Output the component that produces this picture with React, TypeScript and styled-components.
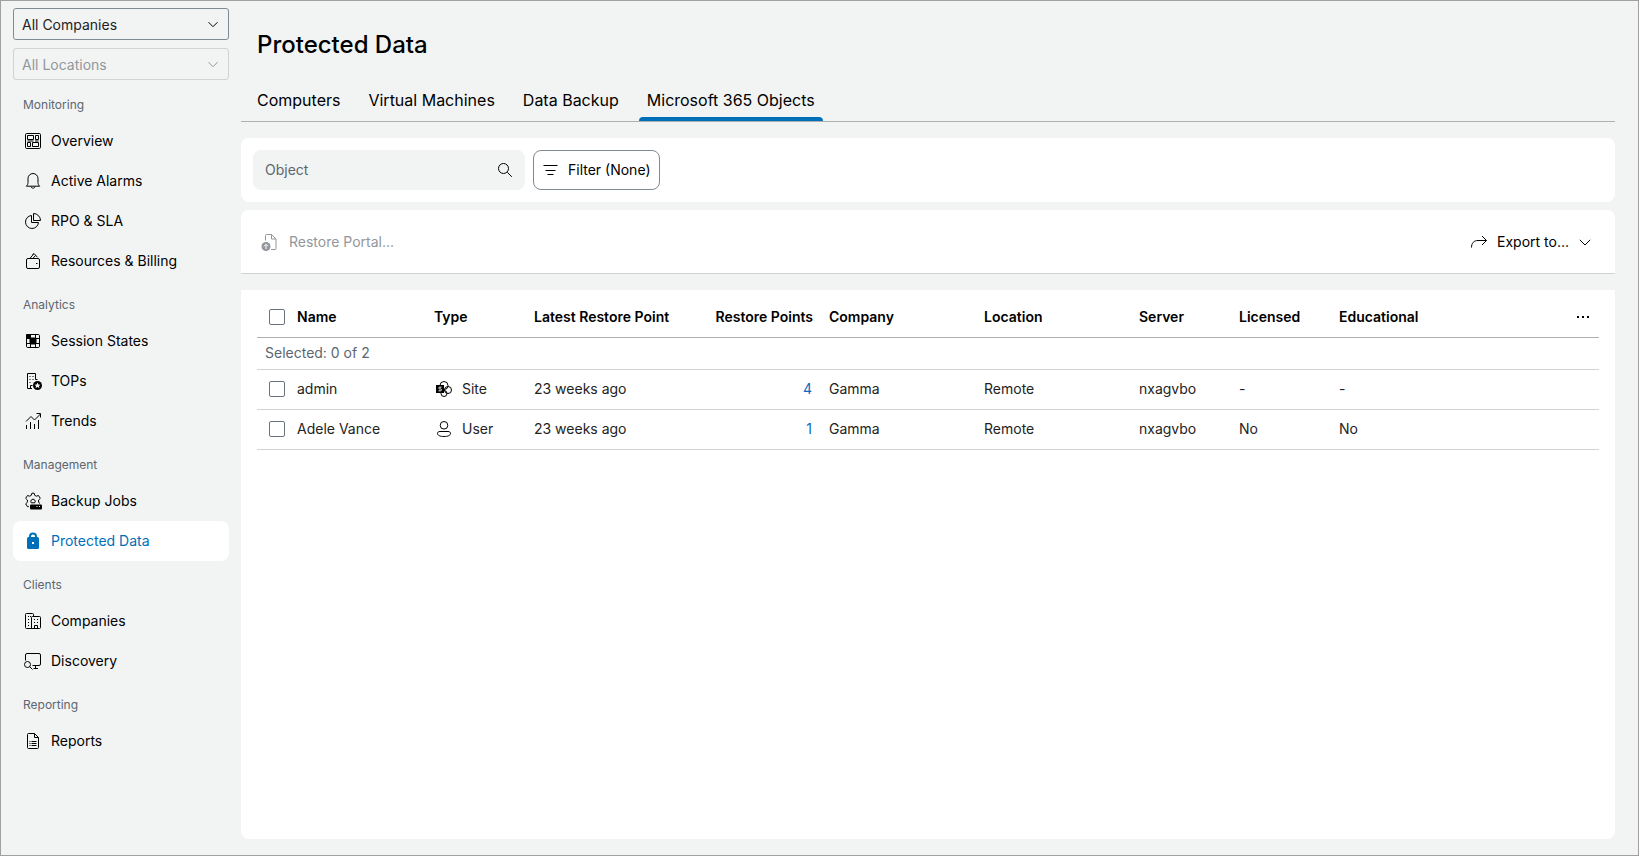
import React from "react";
import styled, { createGlobalStyle } from "styled-components";

const color = {
  page: "#f2f4f4",
  panel: "#ffffff",
  text: "#000000",
  cell: "#232323",
  muted: "#5c6670",
  disabled: "#92979c",
  accent: "#006fba",
  link: "#0d6abf",
  line: "#d0d2d3",
  lineStrong: "#adb0b2",
  control: "#808a94",
};

const GlobalStyle = createGlobalStyle`
  *, *::before, *::after { box-sizing: border-box; }
  body { margin: 0; background: ${color.page}; }
  body, button, input, select {
    font-family: Inter, "Liberation Sans", sans-serif;
    font-size: 14px;
    line-height: 20px;
    color: ${color.text};
  }
`;

const Page = styled.div`
  display: flex;
  min-height: 100vh;
  border: 1px solid #a0a0a0;
  background: ${color.page};
`;

const Sidebar = styled.aside`
  flex: none;
  width: 228px;
  padding: 7px 0 16px 12px;
`;

const Scope = styled.div`
  display: flex;
  flex-direction: column;
  gap: 8px;
`;

const SelectBox = styled.div<{ $disabled?: boolean }>`
  display: grid;
  align-items: center;
  color: ${(p) => (p.$disabled ? color.disabled : color.text)};

  > * { grid-area: 1 / 1; }
  > svg {
    justify-self: end;
    margin-right: 10px;
    pointer-events: none;
  }
`;

const Select = styled.select`
  appearance: none;
  width: 100%;
  height: 32px;
  padding: 2px 32px 0 8px;
  border: 1px solid ${color.control};
  border-radius: 3px;
  background: transparent;
  color: ${color.cell};

  &:disabled {
    border-color: #cfd3d5;
    color: ${color.disabled};
    opacity: 1;
  }
`;

const Nav = styled.nav`
  padding-top: 1px;
`;

const NavHeading = styled.h2`
  margin: 0;
  padding: 14px 10px 6px;
  font-size: 12px;
  line-height: 20px;
  font-weight: 400;
  color: ${color.muted};
`;

const NavList = styled.ul`
  margin: 0;
  padding: 0;
  list-style: none;
`;

const NavLink = styled.a<{ $active?: boolean }>`
  display: flex;
  align-items: center;
  gap: 10px;
  height: 40px;
  padding: 0 12px;
  border-radius: 8px;
  color: ${(p) => (p.$active ? color.accent : color.text)};
  background: ${(p) => (p.$active ? color.panel : "transparent")};
  text-decoration: none;
`;

const Main = styled.main`
  flex: 1;
  min-width: 0;
  display: flex;
  flex-direction: column;
  padding: 28px 23px 16px 12px;
`;

const Title = styled.h1`
  margin: 0 16px 16px;
  font-size: 24px;
  line-height: 32px;
  font-weight: 500;
`;

const Tabs = styled.div`
  display: flex;
  gap: 12px;
  padding: 0 8px;
  border-bottom: 1px solid ${color.lineStrong};
`;

const Tab = styled.button<{ $active?: boolean }>`
  display: flex;
  flex-direction: column;
  justify-content: flex-end;
  gap: 5px;
  height: 44px;
  padding: 0;
  border: 0;
  background: none;
  font-size: 16px;
  line-height: 24px;
  white-space: nowrap;

  &::after {
    content: "";
    align-self: stretch;
    height: 4px;
    border-radius: 4px 4px 0 0;
    background: ${(p) => (p.$active ? color.accent : "transparent")};
  }
`;

const TabLabel = styled.span`
  padding: 0 8px;
`;

const FilterPanel = styled.section`
  display: flex;
  gap: 8px;
  margin-top: 16px;
  padding: 12px;
  border-radius: 8px;
  background: ${color.panel};
`;

const SearchBox = styled.div`
  display: flex;
  align-items: center;
  width: 272px;
  height: 40px;
  padding: 0 12px;
  border-radius: 8px;
  background: ${color.page};
`;

const SearchInput = styled.input`
  flex: 1;
  min-width: 0;
  padding: 0;
  border: 0;
  background: none;
  outline: none;

  &::placeholder {
    color: ${color.muted};
    opacity: 1;
  }
`;

const IconButton = styled.button`
  display: flex;
  padding: 0;
  border: 0;
  background: none;
`;

const FilterButton = styled.button`
  display: flex;
  align-items: center;
  gap: 10px;
  height: 40px;
  padding: 0 8px;
  border: 1px solid ${color.control};
  border-radius: 8px;
  background: ${color.panel};
  white-space: nowrap;
`;

const Toolbar = styled.section`
  display: flex;
  align-items: center;
  justify-content: space-between;
  height: 64px;
  margin-top: 8px;
  padding: 0 20px;
  border-bottom: 1px solid ${color.line};
  border-radius: 8px 8px 0 0;
  background: ${color.panel};
`;

const ToolButton = styled.button`
  display: flex;
  align-items: center;
  gap: 10px;
  height: 40px;
  padding: 0;
  border: 0;
  background: none;

  &:disabled {
    gap: 12px;
    color: ${color.disabled};
  }
`;

const ChevronSlot = styled.span`
  display: flex;
  padding-right: 4px;
`;

const TablePanel = styled.section`
  flex: 1;
  margin-top: 16px;
  padding: 8px 16px;
  border-radius: 0 0 8px 8px;
  background: ${color.panel};
`;

const Table = styled.table`
  width: 100%;
  table-layout: fixed;
  border-collapse: collapse;
`;

const Col = styled.col<{ $width?: number }>`
  width: ${(p) => (p.$width ? `${p.$width}px` : "auto")};
`;

const Row = styled.tr<{ $head?: boolean }>`
  border-bottom: 1px solid ${(p) => (p.$head ? color.lineStrong : color.line)};
`;

const HeadCell = styled.th<{ $end?: boolean }>`
  height: 39px;
  padding: 0 8px;
  font-weight: 600;
  text-align: ${(p) => (p.$end ? "right" : "left")};
  white-space: nowrap;
`;

const Cell = styled.td<{ $end?: boolean }>`
  height: 40px;
  padding: 0 8px;
  color: ${color.cell};
  text-align: ${(p) => (p.$end ? "right" : "left")};
  white-space: nowrap;

  svg { color: ${color.text}; }
`;

const SelectionCell = styled.td`
  height: 32px;
  padding: 0 8px;
  color: ${color.muted};
`;

const TypeLabel = styled.span`
  display: flex;
  align-items: center;
  gap: 10px;
  padding-left: 2px;
`;

const MoreSlot = styled.div`
  display: flex;
  justify-content: flex-end;
`;

const PointsLink = styled.a`
  color: ${color.link};
  text-decoration: none;
  padding-right: 1px;
`;

const Checkbox = styled.input`
  appearance: none;
  display: block;
  width: 16px;
  height: 16px;
  margin: 0 4px;
  border: 1px solid #6a737c;
  border-radius: 2px;
  background: ${color.panel};

  &:checked { background: ${color.accent}; }
`;

const IconFrame = styled.svg`
  flex: none;
  display: block;
  overflow: visible;
`;

const Svg = ({ children }: { children: React.ReactNode }) => (
  <IconFrame width="16" height="16" viewBox="0 0 16 16" fill="none" stroke="currentColor" strokeWidth="1" aria-hidden="true">
    {children}
  </IconFrame>
);

const Chevron = () => (
  <IconFrame width="12" height="8" viewBox="0 0 12 8" fill="none" stroke="currentColor" strokeWidth="1" aria-hidden="true">
    <path d="M.8 1.800 6 7 11.200 1.800" />
  </IconFrame>
);

const SmallChevron = () => (
  <IconFrame width="12" height="8" viewBox="0 0 12 8" fill="none" stroke="currentColor" strokeWidth="1" aria-hidden="true">
    <path d="M1.500 2.200 6 6.700 10.500 2.200" />
  </IconFrame>
);

const OverviewIcon = () => (
  <Svg>
    <rect x=".5" y=".5" width="15" height="15" rx="1.200" />
    <path d="M2.500 2.500h6v4h-6zM10.500 2.500h3v4h-3zM2.500 9.500h3v4h-3zM7.500 9.500h6v4h-6zM2.500 8h6M10 8h3.500" />
  </Svg>
);
const BellIcon = () => (
  <Svg>
    <path d="M1.300 13.200c1.200-1.100 1.700-2.200 1.700-3.700V5.500a5 5 0 0 1 10 0v4c0 1.500.5 2.600 1.700 3.700zM6 13.500c.3 2.200 3.700 2.200 4 0" strokeLinejoin="round" />
  </Svg>
);
const PieIcon = () => (
  <Svg>
    <path d="M6.500 2.500a6.500 6.500 0 1 0 7 7h-7z" />
    <path d="M8.500.5v7h7a7 7 0 0 0-7-7z" />
  </Svg>
);
const WalletIcon = () => (
  <Svg>
    <rect x="1.500" y="5.500" width="13" height="10" rx="1.500" />
    <path d="M11 10.500h1.500M5 5.300 8.500 1.200M8 5.300 10.500 2.500M7.500 1.500 9 .5l3.500 3.800" />
  </Svg>
);
const HeatmapIcon = () => (
  <Svg>
    <rect x="1.500" y="1.500" width="13" height="13" rx="1.200" />
    <path d="M5.500 1.500v13M10.500 1.500v13M1.500 5.500h13M1.500 10.500h13" />
    <path d="M5 5h6v6H5zM1.500 1.500h4v4h-4z" fill="currentColor" />
  </Svg>
);
const TopsIcon = () => (
  <Svg>
    <path d="M7 15.500H2.500V.5h8v6M5.500 15v-2.500h2M10.500 6.500h2" />
    <path d="M4.500 3.500h1M7.500 3.500h1M4.500 6.500h1M7.500 6.500h1M4.500 9.500h1" />
    <circle cx="12.500" cy="12.500" r="4.500" fill="currentColor" stroke="none" />
    <path d="m12.500 9.600.9 1.800 2 .3-1.400 1.400.3 2-1.800-1-1.800 1 .3-2-1.400-1.400 2-.3z" fill={color.page} stroke="none" />
  </Svg>
);
const TrendsIcon = () => (
  <Svg>
    <path d="M1.500 12v4M5.500 9v7M9.500 11v5M13.500 7v9" />
    <path d="M1 8.500 6 3.500l3.500 3.500L15.500 1M11.500.5h4v4" />
  </Svg>
);
const JobsIcon = () => (
  <Svg>
    <path d="M3.800 13.500 2.500 13.800.7 10.800 2.400 9.300V7L.7 5.400 2.500 2.500 4.700 3.200 6.300 2.300 6.900.2H9.100L9.700 2.300 11.300 3.200 13.500 2.500 15.300 5.400 13.600 7V9.300L15 10.500" strokeLinejoin="round" />
    <path d="M6.300 9.800a2.200 2.200 0 1 1 3.400 0z" />
    <rect x="5" y="11.500" width="12" height="5" rx="1" fill="currentColor" stroke="none" />
    <path d="M11.500 13.500h1M14 13.500h1" stroke={color.page} />
  </Svg>
);
const LockIcon = () => (
  <Svg>
    <path d="M5 5V3.500a3 3 0 0 1 6 0V5" strokeWidth="2" />
    <rect x="2" y="4" width="12" height="12" rx="1.500" fill="currentColor" stroke="none" />
    <path d="M7 10h2" stroke="#fff" strokeWidth="2" />
  </Svg>
);
const CompaniesIcon = () => (
  <Svg>
    <path d="M7.500 15.500h-6a1 1 0 0 1-1-1v-13a1 1 0 0 1 1-1h6a1 1 0 0 1 1 1v2M6.500 15.500v-11a1 1 0 0 1 1-1h7a1 1 0 0 1 1 1v10a1 1 0 0 1-1 1zM9.500 15.500v-3h3v3" />
    <path d="M3 3.500h1M5 3.500h1M3 6.500h1M3 9.500h1M3 12.500h1M9 6.500h1M12 6.500h1M9 9.500h1M12 9.500h1" />
  </Svg>
);
const DiscoveryIcon = () => (
  <Svg>
    <path d="M.5 7.500V2A1.500 1.500 0 0 1 2 .5h12A1.500 1.500 0 0 1 15.500 2v9a1.500 1.500 0 0 1-1.500 1.500H7.500M10.500 12.500v3M8.500 15.500H13" />
    <circle cx="2.500" cy="11.500" r="3" />
    <path d="m4.700 13.700 2.800 2.800" />
  </Svg>
);
const ReportIcon = () => (
  <Svg>
    <path d="M9.500.5h-6a1 1 0 0 0-1 1v13a1 1 0 0 0 1 1h9a1 1 0 0 0 1-1v-10zM9.500.5v4h4" strokeLinejoin="round" />
    <path d="M4.500 8.500h1M6.500 8.500h5M4.500 10.500h1M6.500 10.500h5M4.500 12.500h1M6.500 12.500h5" />
  </Svg>
);
const SearchIcon = () => (
  <Svg>
    <circle cx="6.500" cy="6.500" r="5" />
    <path d="m10.300 10.300 4.500 4.500" />
  </Svg>
);
const FilterIcon = () => (
  <Svg>
    <path d="M1.500 3.500h14M3.500 8.500h10M5.500 12.500h6" />
  </Svg>
);
const RestoreIcon = () => (
  <Svg>
    <path d="M4.500 6.500V1.500a1 1 0 0 1 1-1h5l4.500 4.500v9.500a1 1 0 0 1-1 1H10M10.500.5v4.500H15" />
    <circle cx="5" cy="12.500" r="4.500" fill="currentColor" stroke="none" />
    <path d="M5 15v-4.500M3 12.300l2-2 2 2" stroke="#fff" />
  </Svg>
);
const ExportIcon = () => (
  <Svg>
    <path d="M.5 13.500C.5 9 3 6.500 7 6.500h8.500M11 2l4.500 4.500L11 11" />
  </Svg>
);
const MoreIcon = () => (
  <Svg>
    <path d="M2 7h2v2H2zM7 7h2v2H7zM12 7h2v2h-2z" fill="currentColor" stroke="none" />
  </Svg>
);
const SiteIcon = () => (
  <Svg>
    <circle cx="8" cy="4.500" r="4" />
    <circle cx="12" cy="9" r="3.500" />
    <circle cx="8" cy="12.500" r="3" />
    <rect x="0" y="4" width="8" height="8" fill="currentColor" stroke="none" />
    <path d="M5.500 6.200H3.500c-1 0-1 1.700 0 1.700h1c1.200 0 1.200 1.900 0 1.900h-2" stroke="#fff" />
  </Svg>
);
const UserIcon = () => (
  <Svg>
    <circle cx="8" cy="4.300" r="3.800" />
    <path d="M4 10.500h8c1.700 0 2.500.8 2.500 1.800 0 2.200-2.500 3.200-6.500 3.200s-6.500-1-6.500-3.200c0-1 .8-1.800 2.500-1.800z" />
  </Svg>
);

type NavItem = { label: string; Icon: React.FC; active?: boolean };

const navigation: { heading: string; items: NavItem[] }[] = [
  {
    heading: "Monitoring",
    items: [
      { label: "Overview", Icon: OverviewIcon },
      { label: "Active Alarms", Icon: BellIcon },
      { label: "RPO & SLA", Icon: PieIcon },
      { label: "Resources & Billing", Icon: WalletIcon },
    ],
  },
  {
    heading: "Analytics",
    items: [
      { label: "Session States", Icon: HeatmapIcon },
      { label: "TOPs", Icon: TopsIcon },
      { label: "Trends", Icon: TrendsIcon },
    ],
  },
  {
    heading: "Management",
    items: [
      { label: "Backup Jobs", Icon: JobsIcon },
      { label: "Protected Data", Icon: LockIcon, active: true },
    ],
  },
  {
    heading: "Clients",
    items: [
      { label: "Companies", Icon: CompaniesIcon },
      { label: "Discovery", Icon: DiscoveryIcon },
    ],
  },
  { heading: "Reporting", items: [{ label: "Reports", Icon: ReportIcon }] },
];

const tabs = ["Computers", "Virtual Machines", "Data Backup", "Microsoft 365 Objects"];
const activeTab = "Microsoft 365 Objects";

const objects = [
  { name: "admin", type: "Site", Icon: SiteIcon, latest: "23 weeks ago", points: 4, company: "Gamma", location: "Remote", server: "nxagvbo", licensed: "-", educational: "-" },
  { name: "Adele Vance", type: "User", Icon: UserIcon, latest: "23 weeks ago", points: 1, company: "Gamma", location: "Remote", server: "nxagvbo", licensed: "No", educational: "No" },
];

const columnWidths = [32, 137, 100, 155, 140, 155, 155, 100, 100, undefined, 32];

export default function App() {
  return (
    <Page>
      <GlobalStyle />
      <Sidebar>
        <Scope>
          <SelectBox>
            <Select aria-label="Company" defaultValue="all">
              <option value="all">All Companies</option>
            </Select>
            <SmallChevron />
          </SelectBox>
          <SelectBox $disabled>
            <Select aria-label="Location" defaultValue="all" disabled>
              <option value="all">All Locations</option>
            </Select>
            <SmallChevron />
          </SelectBox>
        </Scope>
        <Nav>
          {navigation.map((group) => (
            <section key={group.heading}>
              <NavHeading>{group.heading}</NavHeading>
              <NavList>
                {group.items.map(({ label, Icon, active }) => (
                  <li key={label}>
                    <NavLink href="#" $active={active} aria-current={active ? "page" : undefined}>
                      <Icon />
                      {label}
                    </NavLink>
                  </li>
                ))}
              </NavList>
            </section>
          ))}
        </Nav>
      </Sidebar>
      <Main>
        <Title>Protected Data</Title>
        <Tabs role="tablist">
          {tabs.map((tab) => (
            <Tab key={tab} role="tab" aria-selected={tab === activeTab} $active={tab === activeTab}>
              <TabLabel>{tab}</TabLabel>
            </Tab>
          ))}
        </Tabs>
        <FilterPanel>
          <SearchBox>
            <SearchInput type="text" placeholder="Object" aria-label="Object" />
            <IconButton aria-label="Search">
              <SearchIcon />
            </IconButton>
          </SearchBox>
          <FilterButton>
            <FilterIcon />
            Filter (None)
          </FilterButton>
        </FilterPanel>
        <Toolbar>
          <ToolButton disabled>
            <RestoreIcon />
            Restore Portal...
          </ToolButton>
          <ToolButton>
            <ExportIcon />
            Export to...
            <ChevronSlot>
              <Chevron />
            </ChevronSlot>
          </ToolButton>
        </Toolbar>
        <TablePanel>
          <Table>
            <colgroup>
              {columnWidths.map((w, i) => (
                <Col key={i} $width={w} />
              ))}
            </colgroup>
            <thead>
              <Row $head>
                <HeadCell>
                  <Checkbox type="checkbox" aria-label="Select all" />
                </HeadCell>
                <HeadCell>Name</HeadCell>
                <HeadCell>Type</HeadCell>
                <HeadCell>Latest Restore Point</HeadCell>
                <HeadCell $end>Restore Points</HeadCell>
                <HeadCell>Company</HeadCell>
                <HeadCell>Location</HeadCell>
                <HeadCell>Server</HeadCell>
                <HeadCell>Licensed</HeadCell>
                <HeadCell>Educational</HeadCell>
                <HeadCell>
                  <MoreSlot>
                    <IconButton aria-label="Choose columns">
                      <MoreIcon />
                    </IconButton>
                  </MoreSlot>
                </HeadCell>
              </Row>
            </thead>
            <tbody>
              <Row>
                <SelectionCell colSpan={11}>Selected: 0 of 2</SelectionCell>
              </Row>
              {objects.map(({ Icon, ...o }) => (
                <Row key={o.name}>
                  <Cell>
                    <Checkbox type="checkbox" aria-label={`Select ${o.name}`} />
                  </Cell>
                  <Cell>{o.name}</Cell>
                  <Cell>
                    <TypeLabel>
                      <Icon />
                      {o.type}
                    </TypeLabel>
                  </Cell>
                  <Cell>{o.latest}</Cell>
                  <Cell $end>
                    <PointsLink href="#">{o.points}</PointsLink>
                  </Cell>
                  <Cell>{o.company}</Cell>
                  <Cell>{o.location}</Cell>
                  <Cell>{o.server}</Cell>
                  <Cell>{o.licensed}</Cell>
                  <Cell>{o.educational}</Cell>
                  <Cell />
                </Row>
              ))}
            </tbody>
          </Table>
        </TablePanel>
      </Main>
    </Page>
  );
}
